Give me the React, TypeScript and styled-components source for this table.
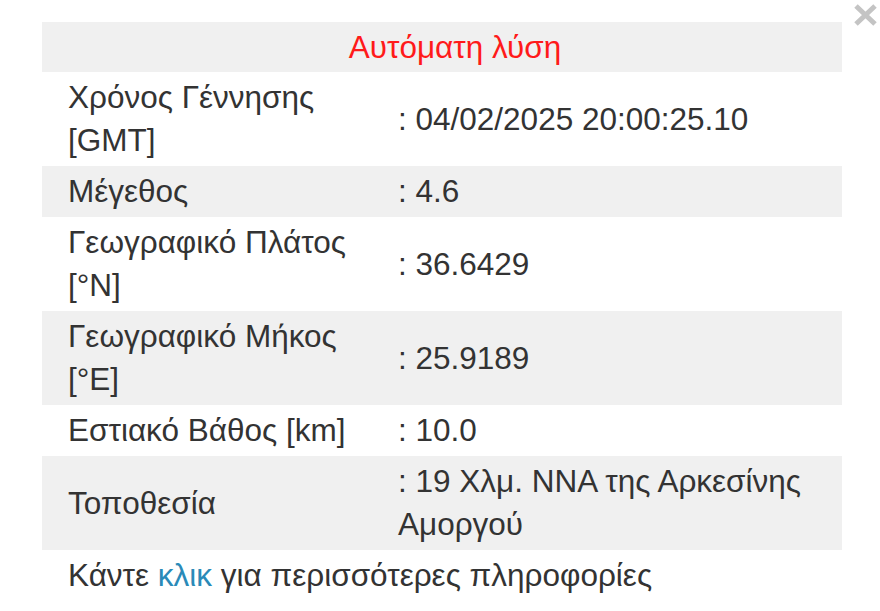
import { createGlobalStyle } from "styled-components";
import styled from "styled-components";

const GlobalStyle = createGlobalStyle`
  html, body {
    margin: 0;
    padding: 0;
    background: #fff;
  }
  body {
    font-family: "Liberation Sans", Arial, sans-serif;
    color: #333;
  }
`;

const Popup = styled.div`
  position: relative;
  width: 880px;
  height: 611px;
  padding: 22px 0 0 42px;
  box-sizing: border-box;
  background: #fff;
  overflow: hidden;
`;

const CloseButton = styled.a`
  position: absolute;
  top: 3px;
  right: 1px;
  width: 27px;
  height: 24px;
  display: flex;
  align-items: center;
  justify-content: center;
  cursor: pointer;
`;

const InfoTable = styled.table`
  width: 800px;
  border-collapse: collapse;
  font-size: 31.5px;
  line-height: 43px;
`;

const Row = styled.tr<{ $shaded?: boolean }>`
  background: ${({ $shaded }) => ($shaded ? "#f0f0f0" : "transparent")};
`;

const TitleCell = styled.td`
  padding: 3.5px 0 3.5px 26px;
  text-align: center;
  color: #ff1a1a;
`;

const LabelCell = styled.td`
  width: 304px;
  padding: 4px 0 4px 26px;
  vertical-align: middle;
`;

const ValueCell = styled.td`
  padding: 4px 10px 4px 26px;
  vertical-align: middle;
`;

const Footer = styled.p`
  margin: 4px 0 0 26px;
  font-size: 31.5px;
  line-height: 43px;
`;

const MoreLink = styled.a`
  color: #2a8ab8;
  text-decoration: none;
`;

const rows = [
  { label: "Χρόνος Γέννησης [GMT]", value: "04/02/2025 20:00:25.10" },
  { label: "Μέγεθος", value: "4.6" },
  { label: "Γεωγραφικό Πλάτος [°N]", value: "36.6429" },
  { label: "Γεωγραφικό Μήκος [°E]", value: "25.9189" },
  { label: "Εστιακό Βάθος [km]", value: "10.0" },
  { label: "Τοποθεσία", value: "19 Χλμ. ΝΝΑ της Αρκεσίνης Αμοργού" },
];

export default function App() {
  return (
    <>
      <GlobalStyle />
      <Popup>
        <CloseButton aria-label="Close">
          <svg width="27" height="24" viewBox="0 0 27 24">
            <path
              d="M4 3 L23 21 M23 3 L4 21"
              stroke="#c4c4c4"
              strokeWidth="5"
              strokeLinecap="butt"
            />
          </svg>
        </CloseButton>
        <InfoTable>
          <tbody>
            <Row $shaded>
              <TitleCell colSpan={2}>Αυτόματη λύση</TitleCell>
            </Row>
            {rows.map((r, i) => (
              <Row key={r.label} $shaded={i % 2 === 1}>
                <LabelCell>{r.label}</LabelCell>
                <ValueCell>: {r.value}</ValueCell>
              </Row>
            ))}
          </tbody>
        </InfoTable>
        <Footer>
          Κάντε <MoreLink href="#">κλικ</MoreLink> για περισσότερες πληροφορίες
        </Footer>
      </Popup>
    </>
  );
}
